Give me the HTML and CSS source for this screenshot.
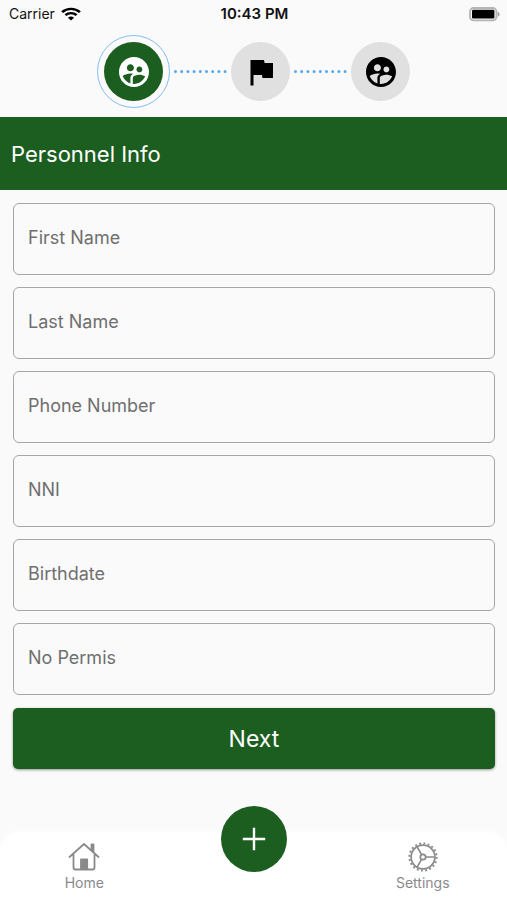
FILE: index.html
```html
<!DOCTYPE html>
<html lang="en">
<head>
<meta charset="utf-8">
<meta name="viewport" content="width=device-width, initial-scale=1">
<title>Personnel Info</title>
<link rel="stylesheet" href="styles.css">
</head>
<body>
<svg class="defs" aria-hidden="true">
  <symbol id="people" viewBox="0 0 24 24"><path d="M11.99 2c-5.52 0-10 4.48-10 10s4.48 10 10 10 10-4.48 10-10-4.48-10-10-10zm3.61 6.34c1.07 0 1.93.86 1.93 1.93 0 1.07-.86 1.93-1.93 1.93-1.07 0-1.93-.86-1.93-1.93-.01-1.07.86-1.93 1.93-1.93zm-6-1.58c1.3 0 2.36 1.06 2.36 2.36 0 1.3-1.06 2.36-2.36 2.36s-2.36-1.06-2.36-2.36c0-1.31 1.05-2.36 2.36-2.36zm0 9.13v3.75c-2.4-.75-4.3-2.6-5.14-4.96 1.05-1.12 3.67-1.69 5.14-1.69.53 0 1.2.08 1.9.22-1.64.87-1.9 2.02-1.9 2.68zM11.99 20c-.27 0-.53-.01-.79-.04v-4.07c0-1.42 2.94-2.13 4.4-2.13 1.07 0 2.92.39 3.84 1.15-1.17 2.97-4.06 5.09-7.45 5.09z"/></symbol>
</svg>
<header class="status">
  <div class="carrier">
    <span>Carrier</span>
    <svg width="20" height="14" viewBox="0 0 18 14" preserveAspectRatio="none" fill="none" stroke="#000" stroke-width="2.4" aria-hidden="true">
      <path d="M1 5.2a11.4 11.4 0 0 1 16 0"/>
      <path d="M4 8.2a7.1 7.1 0 0 1 10 0"/>
      <path d="M9 13.6 6.2 10.8a4 4 0 0 1 5.6 0z" fill="#000" stroke="none"/>
    </svg>
  </div>
  <time class="clock">10:43 PM</time>
  <svg class="battery" width="31" height="15" viewBox="0 0 31 15" aria-hidden="true">
    <rect x="1" y="1" width="26.400" height="12.400" rx="3.6" fill="#fafafa" stroke="#b4b4b4" stroke-width="1.800"/>
    <rect x="3" y="2.8" width="22.4" height="8.800" rx="1.4"/>
    <path d="M28.6 4.8c1.4.5 2 1.4 2 2.5s-.6 2-2 2.5z" fill="#a0a0a0"/>
  </svg>
</header>
<nav class="stepper" aria-label="Progress">
  <span class="ring"><button class="step active" aria-label="Personnel" aria-current="step"><svg width="36" height="36"><use href="#people"/></svg></button></span>
  <svg class="dots" viewBox="0 0 53 3" aria-hidden="true"><path d="M1.5 1.5H52"/></svg>
  <button class="step" aria-label="Flag"><svg width="36" height="36" viewBox="0 0 24 24"><path d="M14.4 6 14 4H5v17h2v-7h5.6l.4 2h7V6z"/></svg></button>
  <svg class="dots" viewBox="0 0 53 3" aria-hidden="true"><path d="M1.5 1.5H52"/></svg>
  <button class="step" aria-label="Group"><svg width="36" height="36"><use href="#people"/></svg></button>
</nav>
<h1 class="title">Personnel Info</h1>
<main>
  <form class="form">
    <input type="text" aria-label="First Name" placeholder="First Name">
    <input type="text" aria-label="Last Name" placeholder="Last Name">
    <input type="tel" aria-label="Phone Number" placeholder="Phone Number">
    <input type="text" aria-label="NNI" placeholder="NNI">
    <input type="text" aria-label="Birthdate" placeholder="Birthdate">
    <input type="text" aria-label="No Permis" placeholder="No Permis">
    <button class="next" type="button">Next</button>
  </form>
</main>
<nav class="tabs" aria-label="Main">
  <a class="tab" href="#home">
    <svg width="32" height="32" viewBox="0 0 32 32" fill="none" stroke="#8a8a8c" stroke-width="1.8" stroke-linecap="round" stroke-linejoin="round" aria-hidden="true">
      <path d="M1.500 16 16 3l14.500 13M5.500 13.500V26.500a2 2 0 0 0 2 2h17a2 2 0 0 0 2-2V13.500"/>
      <path d="M23.500 3.500h2v7l-2-1.800z" fill="#8a8a8c"/>
      <path d="M13 28V18.500h6.200V28z" fill="#8a8a8c"/>
    </svg>
    <span>Home</span>
  </a>
  <button class="add" aria-label="Add"><svg width="24" height="24" viewBox="0 0 24 24" fill="none" stroke="#fff" stroke-width="2.400"><path d="M12 .8v22.400M.8 12h22.400"/></svg></button>
  <a class="tab" href="#settings">
    <svg width="32" height="32" viewBox="0 0 32 32" fill="none" stroke="#8a8a8c" stroke-width="1.700" aria-hidden="true">
      <circle cx="16" cy="16" r="11.900"/>
      <circle cx="16" cy="16" r="13.600" stroke-width="2" stroke-dasharray="1.900 2.373"/>
      <circle cx="16" cy="16" r="2.700"/>
      <path d="M18.700 16h9M14.600 13.600 10.100 5.800M14.600 18.400l-4.500 7.800"/>
    </svg>
    <span>Settings</span>
  </a>
</nav>
</body>
</html>
```
FILE: styles.css
```css
* { box-sizing: border-box; }

body {
  margin: 0;
  min-height: 100vh;
  display: flex;
  flex-direction: column;
  background: #fafafa;
  font-family: Inter, Roboto, sans-serif;
}

button, input { font: inherit; }
button { border: 0; padding: 0; cursor: pointer; }
svg { display: block; }
.defs { position: absolute; width: 0; height: 0; }

.status {
  display: grid;
  grid-template-columns: 1fr auto 1fr;
  align-items: center;
  height: 28px;
  padding: 0 7px 0 9px;
  font-size: 14px;
  line-height: 20px;
  color: #111;
}
.carrier { display: flex; align-items: center; gap: 6px; }
.clock { font-size: 15px; font-weight: 600; }
.battery { justify-self: end; }

.stepper {
  display: flex;
  justify-content: center;
  align-items: center;
  gap: 4px;
  padding: 7px 0 9px;
}
.ring {
  padding: 6px;
  border: 1px solid #82bdf5;
  border-radius: 50%;
}
.step {
  display: flex;
  align-items: center;
  justify-content: center;
  width: 59px;
  height: 59px;
  border-radius: 50%;
  background: #e0e0e0;
  color: #000;
}
.step svg { fill: currentColor; }
.step.active { background: #1b5e20; color: #fff; }
.dots {
  width: 53px;
  height: 3px;
  fill: none;
  stroke: #55a8f0;
  stroke-width: 3;
  stroke-linecap: round;
  stroke-dasharray: 0 6.200;
}

.title {
  margin: 0;
  padding: 21px 11px 20px;
  background: #1b5e20;
  color: #fff;
  font-size: 22px;
  line-height: 32px;
  font-weight: 400;
}

.form {
  display: flex;
  flex-direction: column;
  gap: 12px;
  padding: 13px 12px 12px 13px;
}
.form input {
  width: 100%;
  height: 72px;
  padding: 0 14px 3px;
  border: 1px solid #a6a6a6;
  border-radius: 6px;
  background: transparent;
  color: #222;
  font-size: 18px;
}
.form input::placeholder { color: #6f6f6f; opacity: 1; }
.next {
  height: 61px;
  margin-top: 1px;
  border-radius: 5px;
  background: #1b5e20;
  color: #fff;
  font-size: 23px;
  box-shadow: 0 1px 3px rgba(0, 0, 0, .4);
}

.tabs {
  display: grid;
  grid-template-columns: 1fr auto 1fr;
  justify-items: center;
  height: 68px;
  margin-top: auto;
  border-radius: 20px 20px 0 0;
  background: #fff;
  box-shadow: 0 0 8px #fff;
}
.tab {
  display: flex;
  flex-direction: column;
  align-items: center;
  padding-top: 9px;
  color: #8a8a8e;
  font-size: 14px;
  line-height: 20px;
  text-decoration: none;
}
.tab:first-child { margin-right: 52px; }
.tab:last-child { margin-left: 52px; }
.add {
  display: flex;
  align-items: center;
  justify-content: center;
  width: 66px;
  height: 66px;
  margin-top: -26px;
  border-radius: 50%;
  background: #1b5e20;
}
```
